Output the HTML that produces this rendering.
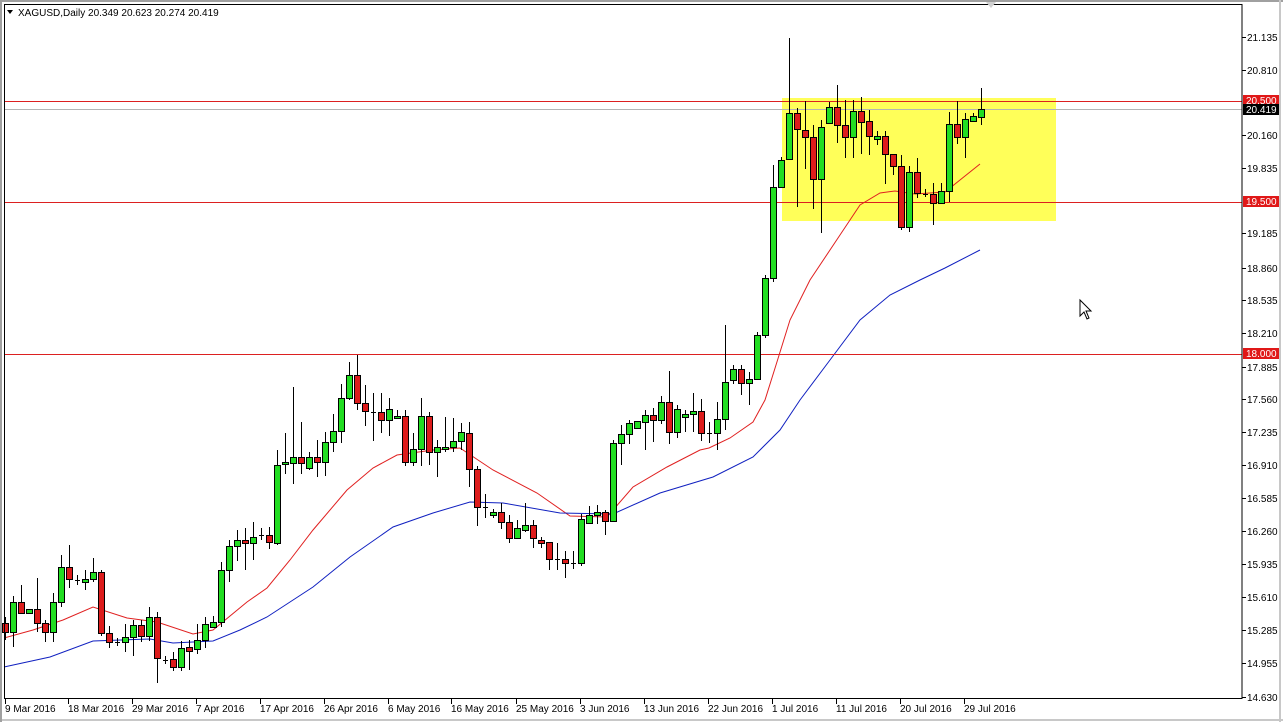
<!DOCTYPE html>
<html><head><meta charset="utf-8"><style>
html,body{margin:0;padding:0;background:#fff;width:1283px;height:722px;overflow:hidden}
svg{display:block}
text{font-family:"Liberation Sans",sans-serif;font-size:10px;fill:#000}
</style></head><body>
<svg id="s" width="1283" height="722" xmlns="http://www.w3.org/2000/svg">
<rect x="0" y="0" width="1283" height="722" fill="#fff"/>
<rect x="0" y="0" width="1283" height="2" fill="#a0a0a0"/>
<rect x="1279" y="0" width="2" height="722" fill="#c8c8c8"/>
<rect x="0" y="719" width="1283" height="2" fill="#c8c8c8"/>
<rect x="0" y="0" width="2" height="722" fill="#a0a0a0"/>
<rect x="782" y="98" width="274" height="123" fill="#ffff3c" opacity="0.85"/>
<g id="ma"></g>
<line x1="4" y1="109.5" x2="1242" y2="109.5" stroke="#b4b4b4" stroke-width="1"/>
<line x1="4" y1="101.5" x2="1242" y2="101.5" stroke="#dc2020" stroke-width="1"/>
<line x1="4" y1="202.5" x2="1242" y2="202.5" stroke="#dc2020" stroke-width="1"/>
<line x1="4" y1="354.5" x2="1242" y2="354.5" stroke="#dc2020" stroke-width="1"/>
<g id="c"></g>
<rect x="4.5" y="4.5" width="1237.5" height="694" fill="none" stroke="#000" stroke-width="1"/>
<polygon points="986,2 996,2 991,8" fill="#d0d0d0"/>
<polygon points="7,10 13,10 10,14" fill="#000"/>
<text x="18" y="16">XAGUSD,Daily  20.349 20.623 20.274 20.419</text>
<g id="ax"></g>
<rect x="1243" y="95" width="36" height="11" fill="#e01818"/>
<text x="1246" y="104" style="fill:#fff">20.500</text>
<rect x="1243" y="104" width="36" height="11" fill="#000"/>
<text x="1246" y="113" style="fill:#fff">20.419</text>
<rect x="1243" y="196" width="36" height="11" fill="#e01818"/>
<text x="1246" y="205" style="fill:#fff">19.500</text>
<rect x="1243" y="348" width="36" height="11" fill="#e01818"/>
<text x="1246" y="357" style="fill:#fff">18.000</text>
<g id="dt">
<text x="5" y="712">9 Mar 2016</text><text x="68" y="712">18 Mar 2016</text><text x="132" y="712">29 Mar 2016</text><text x="196" y="712">7 Apr 2016</text><text x="260" y="712">17 Apr 2016</text><text x="324" y="712">26 Apr 2016</text><text x="388" y="712">6 May 2016</text><text x="451" y="712">16 May 2016</text><text x="516" y="712">25 May 2016</text><text x="580" y="712">3 Jun 2016</text><text x="644" y="712">13 Jun 2016</text><text x="708" y="712">22 Jun 2016</text><text x="772" y="712">1 Jul 2016</text><text x="836" y="712">11 Jul 2016</text><text x="900" y="712">20 Jul 2016</text><text x="964" y="712">29 Jul 2016</text>
</g>
<text x="1247" y="41">21.135</text><text x="1247" y="74">20.810</text><text x="1247" y="139">20.160</text><text x="1247" y="172">19.835</text><text x="1247" y="237">19.185</text><text x="1247" y="272">18.860</text><text x="1247" y="304">18.535</text><text x="1247" y="337">18.210</text><text x="1247" y="371">17.885</text><text x="1247" y="403">17.560</text><text x="1247" y="436">17.235</text><text x="1247" y="469">16.910</text><text x="1247" y="502">16.585</text><text x="1247" y="535">16.260</text><text x="1247" y="568">15.935</text><text x="1247" y="601">15.610</text><text x="1247" y="634">15.285</text><text x="1247" y="667">14.955</text><text x="1247" y="701">14.630</text>
<path d="M1080,300 L1080,316 L1084,312 L1087,319 L1089,318 L1086,311 L1091,311 Z" fill="#fff" stroke="#000" stroke-width="1"/>
</svg>
<script>
var NS="http://www.w3.org/2000/svg";
function el(p,t,a){var e=document.createElementNS(NS,t);for(var k in a)e.setAttribute(k,a[k]);p.appendChild(e);return e;}
// [open, close, high, low] in pixel y
var d=[
[623,632,617,640],[632,602,596,647],[602,613,585,614],[613,609,609,613],[609,623,578,632],[623,632,620,642],[632,602,593,642],[602,567,555,607],[567,579,545,588],[580,580,575,585],
[582,579,570,590],[579,572,558,582],[572,633,570,636],[633,642,626,648],[642,642,638,646],[642,637,624,652],[637,625,620,656],[625,636,620,642],[636,617,607,641],[617,658,612,683],
[660,660,656,664],[659,667,652,671],[667,648,641,671],[647,651,640,670],[649,640,624,654],[640,624,617,648],[627,622,616,627],[622,570,562,627],[570,546,540,582],[546,540,530,561],
[540,543,528,570],[543,537,522,560],[535,535,528,540],[535,542,527,549],[543,465,450,545],[464,462,433,474],[463,457,387,484],[457,463,422,474],[468,457,452,470],[457,462,440,477],
[462,442,432,476],[442,431,414,452],[431,398,384,443],[398,375,362,400],[375,403,355,410],[403,411,385,426],[412,412,393,441],[412,420,393,433],[420,409,398,436],[418,416,410,419],
[416,462,410,466],[462,449,433,466],[449,416,398,466],[416,452,412,465],[452,447,440,477],[449,447,417,452],[447,441,418,452],[441,432,423,450],[433,469,422,487],[469,507,466,526],
[507,507,494,518],[515,512,509,518],[512,522,503,529],[522,538,515,543],[538,528,520,538],[530,525,503,532],[525,538,520,548],[540,543,537,548],[542,559,542,570],[559,559,543,570],
[559,563,551,578],[563,563,551,569],[563,519,514,566],[523,515,506,523],[515,512,505,524],[512,521,510,535],[521,443,440,521],[443,434,425,465],[434,423,420,444],[428,421,421,428],
[422,415,410,450],[415,420,408,442],[420,402,396,424],[402,432,371,444],[432,409,405,438],[417,414,410,432],[414,411,393,432],[411,433,399,441],[433,433,422,443],[433,419,402,450],
[419,382,325,430],[380,369,365,384],[369,383,365,395],[383,379,372,405],[379,335,332,380],[335,278,275,338],[278,187,165,282],[187,160,157,186],[159,113,38,160],[113,129,108,207],
[130,137,101,169],[137,179,125,209],[179,127,120,233],[123,107,102,123],[107,125,85,143],[125,137,100,158],[137,111,100,158],[111,122,97,154],[121,136,110,155],[139,136,131,145],
[136,154,131,184],[154,166,154,175],[166,227,155,230],[227,172,166,232],[172,193,158,198],[194,194,189,197],[194,203,183,225],[203,191,183,203],[191,124,112,202],[124,137,101,144],
[137,119,113,158],[121,116,113,121],[117,109,88,125]];
var g=document.getElementById("c");
d.forEach(function(c,i){var x=5+8*i;var o=c[0],cl=c[1],h=c[2],l=c[3];
 el(g,"line",{x1:x+.5,y1:h,x2:x+.5,y2:l,stroke:"#000","stroke-width":1});
 var t=Math.min(o,cl),b=Math.max(o,cl);
 if(b-t<1){el(g,"line",{x1:x-2,y1:t+.5,x2:x+3,y2:t+.5,stroke:"#000","stroke-width":1});}
 else el(g,"rect",{x:x-2.5,y:t+.5,width:6,height:b-t,fill:(cl<o?"#22dd22":"#dd1c1c"),stroke:"#000","stroke-width":1});
});
var m=document.getElementById("ma");
var red=[[4,638],[33,630],[63,620],[93,607],[127,618],[157,622],[193,634],[213,630],[247,602],[267,588],[290,560],[313,530],[347,490],[373,468],[397,455],[433,450],[460,448],[493,470],[537,493],[570,516],[607,517],[633,487],[667,467],[700,450],[709,448],[730,438],[753,422],[765,400],[776,365],[790,320],[810,280],[840,235],[860,205],[880,193],[895,191],[915,194],[945,192],[960,180],[980,164]];
var blue=[[4,667],[50,657],[93,641],[150,639],[173,643],[213,641],[240,630],[267,617],[313,587],[350,557],[393,527],[433,513],[470,502],[503,503],[560,513],[613,514],[660,493],[713,477],[753,457],[780,430],[800,400],[830,360],[860,320],[890,295],[920,280],[945,268],[980,250]];
el(m,"polyline",{points:red.map(function(p){return p.join(",")}).join(" "),fill:"none",stroke:"#e02020","stroke-width":1});
el(m,"polyline",{points:blue.map(function(p){return p.join(",")}).join(" "),fill:"none",stroke:"#1020c0","stroke-width":1});
var ax=document.getElementById("ax");
for(var k=0;k<19;k++){var y=37+k*(660/20*20/19);}
[37,70,135,168,233,268,300,333,367,399,432,465,498,531,564,597,630,663,697].forEach(function(y){el(ax,"line",{x1:1242,y1:y+.5,x2:1246,y2:y+.5,stroke:"#000"});});
[5,68,132,196,260,324,388,451,516,580,644,708,772,836,900,964].forEach(function(x){el(ax,"line",{x1:x+.5,y1:699,x2:x+.5,y2:704,stroke:"#000"});});
</script>
</body></html>
